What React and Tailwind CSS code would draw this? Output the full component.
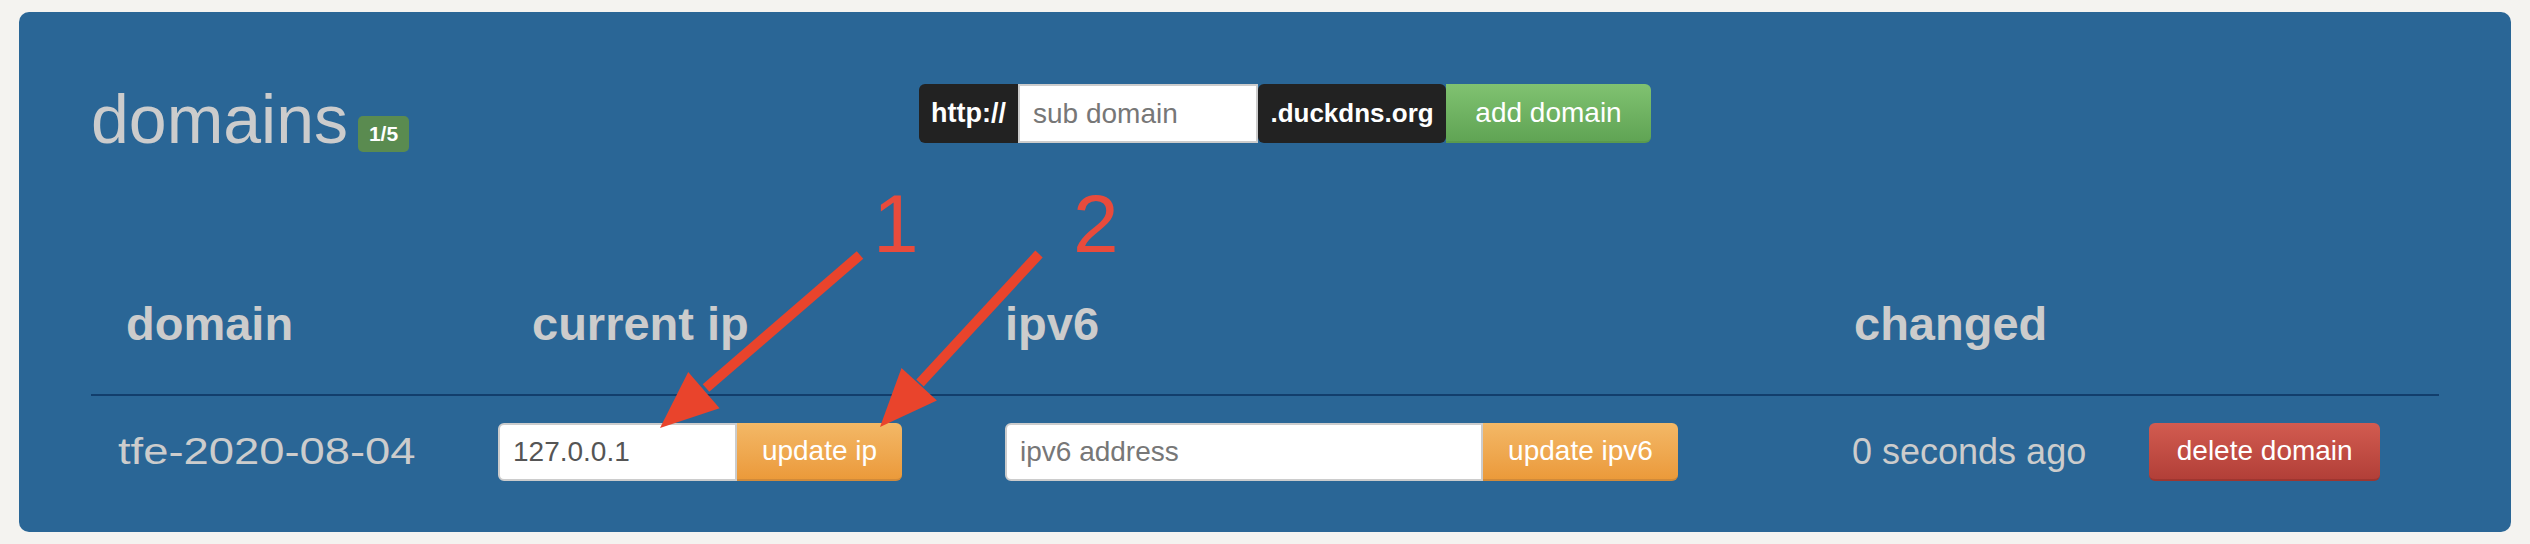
import React from 'react';

const font = "font-['Liberation_Sans',Arial,sans-serif]";

// red annotation arrows drawn over the table
const Arrow = ({ shaft, head }) => (
  <g>
    <line x1={shaft[0]} y1={shaft[1]} x2={shaft[2]} y2={shaft[3]} stroke="#e9442c" strokeWidth="10" strokeLinecap="butt" />
    <polygon points={head} fill="#e9442c" />
  </g>
);

const App = () => {
  return (
    <div className={`relative w-[2530px] h-[544px] overflow-hidden bg-[#f4f3f0] pt-[12px] px-[19px] ${font}`}>
      <div className="h-[520px] rounded-[10px] bg-[#2a6696] pt-[72px] px-[72px]">
        {/* top row: title + add domain form */}
        <div className="flex items-start">
          <div className="flex items-end mt-[1px]">
            <h1 className="text-[68px] leading-[68px] text-[#cccccc]">domains</h1>
            <span className="ml-[10px] mb-[1px] flex h-[36px] w-[51px] items-center justify-center rounded-[5px] bg-[#5a8b50] text-[21px] font-bold text-white">
              1/5
            </span>
          </div>

          <div className="ml-[510px] flex h-[59px]">
            <div className="flex w-[99px] items-center justify-center rounded-l-[6px] bg-[#222222] text-[27px] font-bold text-white">
              http://
            </div>
            <input
              readOnly
              placeholder="sub domain"
              className="w-[240px] border-2 border-[#cccccc] bg-white px-[13px] text-[28px] text-[#555] placeholder:text-[#777777] outline-none"
            />
            <div className="flex w-[188px] items-center justify-center rounded-[6px] bg-[#222222] text-[26px] font-bold text-white">
              .duckdns.org
            </div>
            <button className="w-[205px] rounded-r-[6px] border-b-2 border-[#5a9a4e] bg-linear-to-b from-[#80c271] to-[#60a454] text-[28px] text-white">
              add domain
            </button>
          </div>
        </div>

        {/* table */}
        <div className="mt-[147px]">
          <div className="flex border-b-2 border-[#123e6c] pb-[47px] text-[47px] font-bold leading-[47px] text-[#cccccc]">
            <div className="w-[441px] pl-[35px]">domain</div>
            <div className="w-[473px]">current ip</div>
            <div className="w-[849px]">ipv6</div>
            <div>changed</div>
          </div>

          <div className="flex h-[85px] items-end">
            <div className="flex h-[58px] w-[407px] items-center pl-[27px]">
              <span className="inline-block origin-left scale-x-[1.26] text-[36px] leading-[36px] text-[#cccccc]">
                tfe-2020-08-04
              </span>
            </div>

            <div className="flex h-[58px] w-[507px]">
              <input
                readOnly
                value="127.0.0.1"
                className="w-[239px] rounded-l-[6px] border-2 border-[#cccccc] bg-white px-[13px] text-[28px] text-[#555555] outline-none"
              />
              <button className="w-[165px] rounded-r-[6px] border-b-2 border-[#d08a3a] bg-linear-to-b from-[#f3b866] to-[#eb9a3a] text-[28px] text-white">
                update ip
              </button>
            </div>

            <div className="flex h-[58px] w-[847px]">
              <input
                readOnly
                placeholder="ipv6 address"
                className="w-[478px] rounded-l-[6px] border-2 border-[#cccccc] bg-white px-[13px] text-[28px] text-[#555555] placeholder:text-[#777777] outline-none"
              />
              <button className="w-[195px] rounded-r-[6px] border-b-2 border-[#d08a3a] bg-linear-to-b from-[#f3b866] to-[#eb9a3a] text-[28px] text-white">
                update ipv6
              </button>
            </div>

            <div className="flex h-[58px] items-center">
              <span className="text-[36px] leading-[36px] text-[#cccccc]">0 seconds ago</span>
              <button className="ml-[63px] h-[58px] w-[231px] rounded-[6px] border-b-2 border-[#9e3630] bg-linear-to-b from-[#d25b50] to-[#b23f38] text-[28px] text-white">
                delete domain
              </button>
            </div>
          </div>
        </div>
      </div>

      {/* annotations */}
      <svg className="pointer-events-none absolute left-0 top-0" width="2530" height="544">
        <Arrow shaft={[860, 255, 706, 388]} head="660,428 719.6,408.3 688.2,371.9" />
        <Arrow shaft={[1039, 254, 920, 383]} head="880,427 936.9,400.5 901.5,368.1" />
      </svg>
      <span className="absolute left-[873px] top-[183px] text-[82px] leading-[82px] text-[#e84b3c]">1</span>
      <span className="absolute left-[1073px] top-[183px] text-[82px] leading-[82px] text-[#e84b3c]">2</span>
    </div>
  );
};

export default App;
